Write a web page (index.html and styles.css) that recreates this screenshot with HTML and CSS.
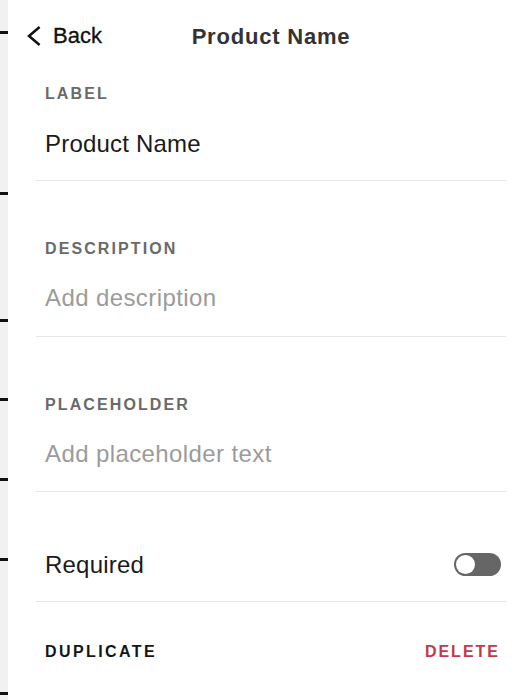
FILE: index.html
```html
<!DOCTYPE html>
<html lang="en">
<head>
<meta charset="utf-8">
<title>Product Name</title>
<link rel="stylesheet" href="styles.css">
</head>
<body>
<div class="page">
  <div class="edge">
    <span class="tick t1"></span>
    <span class="tick t2"></span>
    <span class="tick t3"></span>
    <span class="tick t4"></span>
    <span class="tick t5"></span>
    <span class="tick t6"></span>
    <span class="tick t7"></span>
  </div>
  <div class="panel">
    <header class="header">
      <a class="back" href="#">
        <svg class="chev" width="14" height="20" viewBox="0 0 14 20" aria-hidden="true"><path d="M12.6 1 L2 10 L12.6 19" fill="none" stroke="#111" stroke-width="2.5" stroke-linejoin="miter" stroke-linecap="butt"/></svg>
        <span>Back</span>
      </a>
      <h1 class="title">Product Name</h1>
      <span></span>
    </header>
    <div class="content">
      <section class="field first">
        <div class="label">LABEL</div>
        <div class="value">Product Name</div>
      </section>
      <section class="field">
        <div class="label">DESCRIPTION</div>
        <div class="value empty">Add description</div>
      </section>
      <section class="field">
        <div class="label">PLACEHOLDER</div>
        <div class="value empty">Add placeholder text</div>
      </section>
      <section class="row">
        <div class="value">Required</div>
        <div class="toggle"><span class="knob"></span></div>
      </section>
      <section class="actions">
        <a class="action" href="#">DUPLICATE</a>
        <a class="action danger" href="#">DELETE</a>
      </section>
    </div>
  </div>
</div>
</body>
</html>
```
FILE: styles.css
```css
* { box-sizing: border-box; }
html, body { margin: 0; padding: 0; background: #fff; }
body {
  font-family: "Liberation Sans", Arial, sans-serif;
  color: #111;
  width: 525px;
  height: 700px;
  overflow: hidden;
}
.page {
  display: flex;
  height: 700px;
}
.edge {
  width: 8px;
  flex: none;
  background: #f1f1f1;
  display: flex;
  flex-direction: column;
}
.tick {
  display: block;
  width: 8px;
  height: 3px;
  background: #111;
}
.t1 { margin-top: 31px; }
.t2 { margin-top: 158px; }
.t3 { margin-top: 124px; }
.t4 { margin-top: 76px; }
.t5 { margin-top: 77px; }
.t6 { margin-top: 77px; }
.t7 { margin-top: 131px; }

.panel {
  flex: 1;
  display: flex;
  flex-direction: column;
}
.header {
  height: 72px;
  display: grid;
  grid-template-columns: 1fr auto 1fr;
  align-items: center;
  padding: 0 10px 0 19px;
}
.back {
  display: flex;
  align-items: center;
  gap: 12px;
  color: #111;
  text-decoration: none;
  font-size: 22px;
  line-height: 26px;
  -webkit-text-stroke: 0.3px #111;
}
.chev { display: block; }
.title {
  margin: 0;
  font-size: 22px;
  font-weight: 700;
  letter-spacing: 0.8px;
  color: #333;
  line-height: 26px;
  padding-top: 2px;
}
.content {
  padding: 0 19px 0 28px;
}
.field {
  display: flex;
  flex-direction: column;
  gap: 24px;
  padding: 58px 5px 22.5px 9px;
  border-bottom: 1px solid #e6e6e6;
}
.field.first {
  padding-top: 12px;
  padding-bottom: 21px;
  gap: 25px;
}
.label {
  font-size: 16px;
  line-height: 20px;
  font-weight: 700;
  letter-spacing: 2.1px;
  color: #6a6a6a;
}
.value {
  font-size: 24px;
  line-height: 30px;
  color: #1a1a1a;
  letter-spacing: 0.2px;
}
.value.empty {
  color: #9b9b9b;
  letter-spacing: 0.4px;
}
.row {
  display: flex;
  align-items: center;
  justify-content: space-between;
  padding: 58px 5px 21px 9px;
  border-bottom: 1px solid #e6e6e6;
}
.toggle {
  width: 47px;
  height: 23px;
  border-radius: 12px;
  background: #666;
  padding: 2px;
  display: flex;
  align-items: center;
  margin-top: -2px;
}
.knob {
  width: 19px;
  height: 19px;
  border-radius: 50%;
  background: #fff;
}
.actions {
  display: flex;
  justify-content: space-between;
  padding: 40px 6px 0 9px;
}
.action {
  font-size: 16px;
  line-height: 20px;
  font-weight: 700;
  letter-spacing: 2.4px;
  color: #151515;
  text-decoration: none;
}
.action.danger {
  color: #c4384a;
  letter-spacing: 2px;
}
```
